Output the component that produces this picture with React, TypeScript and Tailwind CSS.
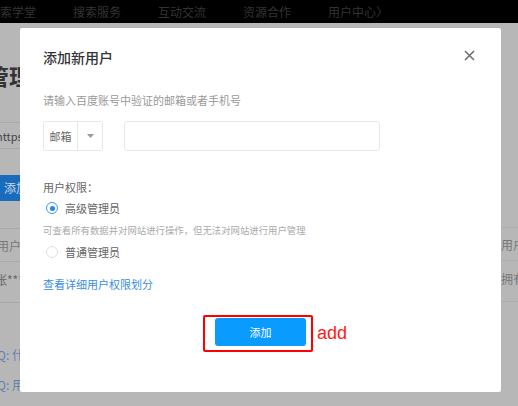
import React from 'react';

const cjk = { fontFamily: '"Noto Sans CJK SC", "Noto Sans", sans-serif' };

const navItems = ['搜索学堂', '搜索服务', '互动交流', '资源合作', '用户中心〉'];

function TopBar() {
  return (
    <div className="flex h-[23px] items-center gap-[37px] bg-black text-[12px] text-[#333]">
      {navItems.map((item, i) => (
        <span key={item} className={i === 0 ? 'ml-[-12px] leading-none' : 'leading-none'}>
          {item}
        </span>
      ))}
    </div>
  );
}

function LeftStrip() {
  return (
    <div className="flex w-[20px] flex-col overflow-hidden">
      <div className="h-[34px]" />
      <div className="ml-[-13px] h-[36px] whitespace-nowrap text-[22px] font-bold leading-[36px] text-[#333]">管理</div>
      <div className="h-[30px] border-b border-[#a9a9a9]" />
      <div className="h-[26px] border-b border-[#a9a9a9] whitespace-nowrap text-[11px] leading-[26px] text-[#444]">
        <span className="ml-[-4px]">https</span>
      </div>
      <div className="h-[26px]" />
      <div className="h-[26px] whitespace-nowrap bg-[#1a6bbc] pl-[4px] text-[12px] leading-[26px] text-[#c9d9ea]">添加</div>
      <div className="h-[28px] border-b border-[#a9a9a9]" />
      <div className="h-[33px] border-b border-[#a9a9a9] whitespace-nowrap text-[12px] leading-[33px] text-[#777]">
        <span className="ml-[-3px]">用户名</span>
      </div>
      <div className="h-[41px] border-b border-[#a9a9a9] whitespace-nowrap text-[12px] leading-[36px] text-[#666]">
        <span className="ml-[-5px]">张***</span>
      </div>
      <div className="h-[39px]" />
      <div className="h-[26px] whitespace-nowrap text-[12px] leading-[26px] text-[#5f82ad]">
        <span className="ml-[-3px]">Q: 什么</span>
      </div>
      <div className="h-[4px]" />
      <div className="h-[26px] whitespace-nowrap text-[12px] leading-[26px] text-[#5f82ad]">
        <span className="ml-[-3px]">Q: 用户</span>
      </div>
    </div>
  );
}

function RightStrip() {
  return (
    <div className="flex w-[17px] flex-col overflow-hidden">
      <div className="h-[182px]" />
      <div className="h-[23px] border-b border-[#adadad]" />
      <div className="h-[33px] border-b border-[#adadad] whitespace-nowrap text-[12px] leading-[33px] text-[#777]">用户</div>
      <div className="h-[41px] border-b border-[#adadad] whitespace-nowrap text-[12px] leading-[36px] text-[#777]">拥有</div>
    </div>
  );
}

function Radio({ checked, children }: { checked?: boolean; children: React.ReactNode }) {
  return (
    <div className="flex h-[16px] items-center gap-[7px] pl-[3px]">
      <span
        className={
          'flex h-[12px] w-[12px] items-center justify-center rounded-full border ' +
          (checked ? 'border-[#3d97f0]' : 'border-[#e2e2e2]')
        }
      >
        {checked && <span className="h-[5px] w-[5px] rounded-full bg-[#1f87ef]" />}
      </span>
      <span className="text-[11px] leading-[16px] text-[#666]">{children}</span>
    </div>
  );
}

function Modal() {
  return (
    <div className="absolute left-[20px] top-[28px] flex h-[364px] w-[481px] flex-col rounded-[2px] bg-white pl-[23px] pt-[19px]">
      <div className="flex items-center justify-between pr-[26px]">
        <h2 className="text-[14px] font-medium leading-[20px] text-[#333]">添加新用户</h2>
        <svg width="11" height="11" viewBox="0 0 11 11" className="mt-[-3px]">
          <path d="M1 1L10 10M10 1L1 10" stroke="#707070" strokeWidth="1.6" />
        </svg>
      </div>
      <p className="mt-[25px] text-[11px] leading-[16px] text-[#999]">请输入百度账号中验证的邮箱或者手机号</p>
      <div className="mt-[13px] flex h-[30px] gap-[21px]">
        <div className="flex w-[60px] rounded-[2px] border border-[#e8e8e8]">
          <span className="flex w-[34px] items-center justify-center border-r border-[#e8e8e8] text-[11px] text-[#666]">邮箱</span>
          <span className="flex flex-1 items-center justify-center">
            <svg width="7" height="4" viewBox="0 0 7 4">
              <path d="M0 0H7L3.5 4Z" fill="#999" />
            </svg>
          </span>
        </div>
        <div className="w-[256px] rounded-[3px] border border-[#e8e8e8]" />
      </div>
      <p className="mt-[28px] text-[11px] leading-[16px] text-[#666]">用户权限：</p>
      <div className="mt-[5px]">
        <Radio checked>高级管理员</Radio>
      </div>
      <p className="mt-[7px] text-[9.4px] leading-[14px] text-[#aaa]">可查看所有数据并对网站进行操作，但无法对网站进行用户管理</p>
      <div className="mt-[7px]">
        <Radio>普通管理员</Radio>
      </div>
      <a className="mt-[16px] text-[11px] leading-[16px] text-[#3b8ee0]">查看详细用户权限划分</a>
      <div className="mt-[23px] flex justify-center pr-[28px]">
        <div className="relative flex h-[37px] w-[110px] items-start rounded-[2px] border-2 border-[#ff0000] pl-[10px] pt-[1px]">
          <button className="h-[28px] w-[91px] rounded-[3px] bg-[#0a9bff] text-[11px] text-white">添加</button>
          <span
            className="absolute left-[112px] top-[5px] text-[18px] leading-[22px] text-[#ff1a1a]"
            style={{ fontFamily: '"Liberation Sans", Arial, sans-serif' }}
          >
            add
          </span>
        </div>
      </div>
    </div>
  );
}

export default function App() {
  return (
    <div className="relative h-[406px] w-[518px] overflow-hidden bg-[#b7b7b7]" style={cjk}>
      <TopBar />
      <div className="flex justify-between">
        <LeftStrip />
        <RightStrip />
      </div>
      <Modal />
    </div>
  );
}
